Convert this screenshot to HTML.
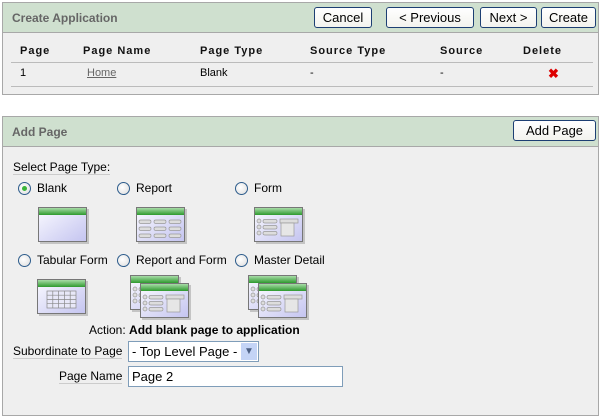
<!DOCTYPE html>
<html><head><meta charset="utf-8"><style>
*{margin:0;padding:0;box-sizing:border-box}
body{width:601px;height:412px;background:#fff;font-family:"Liberation Sans",Tahoma,sans-serif;font-size:12px;color:#000;position:relative;overflow:hidden}
.a{position:absolute;white-space:nowrap}
.box{position:absolute;border:1px solid #a8a8a8;background:#efefef}
.hd{position:absolute;left:0;right:0;top:0;height:30px;background:#cfe0cf;border-bottom:1px solid #a8a8a8}
.ht{position:absolute;left:9px;top:8px;font-weight:bold;color:#666;font-size:12px}
.btn{position:absolute;height:21px;border:1px solid #1d3f73;border-radius:3px;background:linear-gradient(#fff,#f3f3ee);font-size:13px;text-align:center;line-height:19px}
.th{font-weight:bold;font-size:11px;letter-spacing:1px;color:#111}
.ln{position:absolute;left:10px;width:582px;height:1px;background:#bbb}
.rad{position:absolute;width:13px;height:13px;border-radius:50%;border:1px solid #2d5c8c;background:radial-gradient(circle at 40% 40%,#fff,#dcdcdc)}
.rad.on::after{content:"";position:absolute;left:3px;top:3px;width:5px;height:5px;border-radius:50%;background:#3ab43a}
.lbl{font-size:12px}
</style></head><body>
<svg width="0" height="0" style="position:absolute">
<defs>
<linearGradient id="bd" x1="0" y1="0" x2="1" y2="1"><stop offset="0" stop-color="#fafaff"/><stop offset="1" stop-color="#c4c4f0"/></linearGradient>
<linearGradient id="gr" x1="0" y1="0" x2="0" y2="1"><stop offset="0" stop-color="#a8dca8"/><stop offset="1" stop-color="#2e9a2e"/></linearGradient>
<g id="win"><rect x="2" y="2" width="49" height="35" fill="#999" opacity=".5"/><rect x="0.5" y="0.5" width="48" height="34" fill="url(#bd)" stroke="#777"/><rect x="1" y="1" width="47" height="7" fill="url(#gr)"/></g>
<g id="frm"><use href="#win"/><g fill="#ddd" stroke="#999" stroke-width=".7"><circle cx="5" cy="14" r="2"/><circle cx="5" cy="20" r="2"/><circle cx="5" cy="26" r="2"/><rect x="9" y="12.5" width="14" height="3.5" rx="1.7"/><rect x="9" y="18.5" width="14" height="3.5" rx="1.7"/><rect x="9" y="24.5" width="14" height="3.5" rx="1.7"/><rect x="26" y="12" width="18" height="4"/><rect x="27" y="16" width="13" height="13" fill="#e6e6e6"/></g></g>
</defs></svg>

<div class="box" style="left:2px;top:2px;width:597px;height:93px">
 <div class="hd"></div><div class="a ht">Create Application</div>
 <div class="btn" style="left:311px;top:4px;width:58px">Cancel</div>
 <div class="btn" style="left:383px;top:4px;width:88px">&lt; Previous</div>
 <div class="btn" style="left:477px;top:4px;width:57px">Next &gt;</div>
 <div class="btn" style="left:538px;top:4px;width:55px">Create</div>
 <div class="a th" style="left:17px;top:42px">Page</div>
 <div class="a th" style="left:80px;top:42px">Page Name</div>
 <div class="a th" style="left:197px;top:42px">Page Type</div>
 <div class="a th" style="left:307px;top:42px">Source Type</div>
 <div class="a th" style="left:437px;top:42px">Source</div>
 <div class="a th" style="left:520px;top:42px">Delete</div>
 <div class="ln" style="top:59px;left:8px"></div>
 <div class="a" style="left:17px;top:64px;font-size:11px">1</div>
 <div class="a" style="left:84px;top:64px;font-size:11px;color:#666;text-decoration:underline">Home</div>
 <div class="a" style="left:197px;top:64px;font-size:11px">Blank</div>
 <div class="a" style="left:307px;top:64px;font-size:11px">-</div>
 <div class="a" style="left:437px;top:64px;font-size:11px">-</div>
 <div class="a" style="left:545px;top:64px;color:#d00;font-weight:bold;font-size:13px;line-height:13px">✖</div>
 <div class="ln" style="top:83px;left:8px"></div>
</div>

<div class="box" style="left:2px;top:116px;width:597px;height:300px">
 <div class="hd"></div><div class="a ht">Add Page</div>
 <div class="btn" style="left:510px;top:3px;width:83px">Add Page</div>
</div>
<div class="a lbl" style="left:13px;top:160px;border-bottom:1px solid #ccc">Select Page Type:</div>
<div class="rad on" style="left:18px;top:182px"></div><div class="a lbl" style="left:37px;top:181px">Blank</div>
<div class="rad" style="left:117px;top:182px"></div><div class="a lbl" style="left:136px;top:181px">Report</div>
<div class="rad" style="left:235px;top:182px"></div><div class="a lbl" style="left:254px;top:181px">Form</div>
<svg class="a" style="left:38px;top:207px" width="54" height="40"><use href="#win"/></svg>
<svg class="a" style="left:136px;top:207px" width="54" height="40"><use href="#win"/><g fill="#ddd" stroke="#999" stroke-width=".7"><rect x="3" y="13" width="12" height="3.5" rx="1.7"/><rect x="18" y="13" width="12" height="3.5" rx="1.7"/><rect x="33" y="13" width="12" height="3.5" rx="1.7"/><rect x="3" y="20" width="12" height="3.5" rx="1.7"/><rect x="18" y="20" width="12" height="3.5" rx="1.7"/><rect x="33" y="20" width="12" height="3.5" rx="1.7"/><rect x="3" y="27" width="12" height="3.5" rx="1.7"/><rect x="18" y="27" width="12" height="3.5" rx="1.7"/><rect x="33" y="27" width="12" height="3.5" rx="1.7"/></g></svg>
<svg class="a" style="left:254px;top:207px" width="54" height="40"><use href="#frm"/></svg>
<div class="rad" style="left:18px;top:254px"></div><div class="a lbl" style="left:37px;top:253px">Tabular Form</div>
<div class="rad" style="left:117px;top:254px"></div><div class="a lbl" style="left:136px;top:253px">Report and Form</div>
<div class="rad" style="left:235px;top:254px"></div><div class="a lbl" style="left:254px;top:253px">Master Detail</div>
<svg class="a" style="left:37px;top:279px" width="54" height="40"><use href="#win"/><g fill="#e8e8f8" stroke="#888" stroke-width=".7"><rect x="10" y="12" width="29" height="17"/><path d="M10 16.2H39M10 20.5H39M10 24.7H39M15.8 12V29M21.6 12V29M27.4 12V29M33.2 12V29" fill="none"/></g></svg>
<svg class="a" style="left:130px;top:275px" width="66" height="46"><use href="#frm"/><g transform="translate(10,8)"><use href="#frm"/></g></svg>
<svg class="a" style="left:248px;top:275px" width="66" height="46"><use href="#frm"/><g transform="translate(10,8)"><use href="#frm"/></g></svg>
<div class="a lbl" style="left:89px;top:323px">Action: <b>Add blank page to application</b></div>
<div class="a lbl" style="left:13px;top:344px;border-bottom:1px solid #ccc">Subordinate to Page</div>
<div class="a" style="left:128px;top:341px;width:131px;height:21px;border:1px solid #7f9db9;background:#fff;font-size:13px;line-height:19px;padding-left:3px">- Top Level Page -<span style="position:absolute;right:1px;top:1px;width:16px;height:17px;background:#c4d4f6;color:#4d6185;font-size:10px;text-align:center;line-height:17px">▼</span></div>
<div class="a lbl" style="left:59px;top:369px;border-bottom:1px solid #ccc">Page Name</div>
<div class="a" style="left:128px;top:366px;width:215px;height:21px;border:1px solid #7f9db9;background:#fff;font-size:13px;line-height:19px;padding-left:3px">Page 2</div>
</body></html>
